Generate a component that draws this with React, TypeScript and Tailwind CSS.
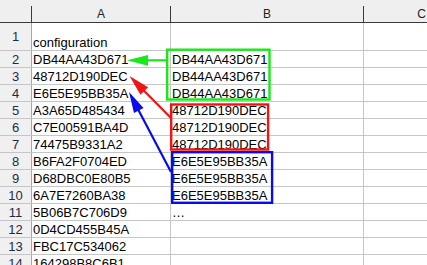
import React from 'react'

const colA = [
  'configuration',
  'DB44AA43D671',
  '48712D190DEC',
  'E6E5E95BB35A',
  'A3A65D485434',
  'C7E00591BA4D',
  '74475B9331A2',
  'B6FA2F0704ED',
  'D68DBC0E80B5',
  '6A7E7260BA38',
  '5B06B7C706D9',
  '0D4CD455B45A',
  'FBC17C534062',
  '164298B8C6B1',
]

const colB = [
  '',
  'DB44AA43D671',
  'DB44AA43D671',
  'DB44AA43D671',
  '48712D190DEC',
  '48712D190DEC',
  '48712D190DEC',
  'E6E5E95BB35A',
  'E6E5E95BB35A',
  'E6E5E95BB35A',
  '…',
  '',
  '',
  '',
]

function Arrow({ x1, y1, x2, y2, color }: { x1: number; y1: number; x2: number; y2: number; color: string }) {
  // arrow from (x1,y1) to the tip at (x2,y2)
  const dx = x2 - x1
  const dy = y2 - y1
  const len = Math.hypot(dx, dy)
  const ux = dx / len
  const uy = dy / len
  const head = 21
  const half = 5.4
  const bx = x2 - ux * head
  const by = y2 - uy * head
  const pts = `${x2},${y2} ${bx - uy * half},${by + ux * half} ${bx + uy * half},${by - ux * half}`
  return (
    <g>
      <line x1={x1} y1={y1} x2={bx + ux} y2={by + uy} stroke={color} strokeWidth={2.2} />
      <polygon points={pts} fill={color} />
    </g>
  )
}

export default function App() {
  return (
    <div className="relative w-[427px] h-[265px] overflow-hidden bg-white text-black" style={{ fontFamily: '"Liberation Sans", Arial, sans-serif' }}>
      <div className="flex bg-[#efefef] pt-[6px] border-b border-[#3a3a3a] text-[12px] leading-[17px] text-[#222]">
        <div className="w-[32px] h-[16px] shrink-0 border-r border-[#3a3a3a]" />
        <div className="w-[139px] h-[16px] shrink-0 border-r border-[#3a3a3a] text-center">A</div>
        <div className="w-[193px] h-[16px] shrink-0 border-r border-[#3a3a3a] text-center">B</div>
        <div className="w-[115px] h-[16px] shrink-0 text-center">C</div>
      </div>

      {colA.map((a, i) => {
        const first = i === 0
        return (
          <div key={i} className={`flex border-b border-[#c6c6c6] text-[13px] ${first ? 'h-[28px]' : 'h-[17px]'}`}>
            <div className={`w-[32px] shrink-0 bg-[#f0f0f0] border-r border-[#a8a8a8] text-center text-[#1d2b4a] ${first ? 'leading-[27px]' : 'leading-[18px]'}`}>
              {i + 1}
            </div>
            <div className={`w-[139px] shrink-0 border-r border-[#c6c6c6] pl-[1px] leading-[18px] whitespace-nowrap ${first ? 'pt-[11px]' : ''}`}>
              {a}
            </div>
            <div className="w-[193px] shrink-0 border-r border-[#c6c6c6] pl-[1px] leading-[18px] whitespace-nowrap">
              {colB[i]}
            </div>
            <div className="w-[115px] shrink-0" />
          </div>
        )
      })}

      <svg className="absolute inset-0 pointer-events-none" width={427} height={265}>
        <rect x={167.2} y={49.7} width={102.3} height={49.8} fill="none" stroke="#1be81b" strokeWidth={2.4} />
        <rect x={171.2} y={104.5} width={96.9} height={45} fill="none" stroke="#f01414" strokeWidth={2.4} />
        <rect x={172.2} y={152.2} width={99.9} height={50.6} fill="none" stroke="#0a0af0" strokeWidth={2.4} />
        <Arrow x1={167} y1={60.3} x2={127} y2={60.3} color="#1be81b" />
        <Arrow x1={171} y1={118} x2={129.5} y2={76} color="#f01414" />
        <Arrow x1={171} y1={172} x2={129} y2={92} color="#0a0af0" />
      </svg>
    </div>
  )
}
